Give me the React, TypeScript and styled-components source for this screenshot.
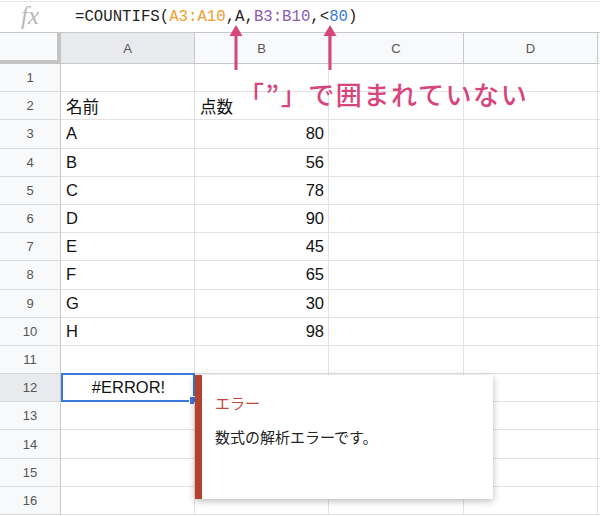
import React, { FC } from 'react'
import { styled, createGlobalStyle } from 'styled-components'

interface RowData {
    num: number
    name?: string
    score?: string
}

const rows: RowData[] = [
    { num: 1 },
    { num: 2, name: '名前', score: '点数' },
    { num: 3, name: 'A', score: '80' },
    { num: 4, name: 'B', score: '56' },
    { num: 5, name: 'C', score: '78' },
    { num: 6, name: 'D', score: '90' },
    { num: 7, name: 'E', score: '45' },
    { num: 8, name: 'F', score: '65' },
    { num: 9, name: 'G', score: '30' },
    { num: 10, name: 'H', score: '98' },
    { num: 11 },
    { num: 12 },
    { num: 13 },
    { num: 14 },
    { num: 15 },
    { num: 16 },
]

const columns = [
    { key: 'A', width: 134 },
    { key: 'B', width: 134 },
    { key: 'C', width: 135 },
    { key: 'D', width: 134 },
]

const PINK = '#d6457c'

const Arrow: FC<{ left: number }> = ({ left }) => (
    <ArrowSvg style={{ left: left - 8 }} width="16" height="46" viewBox="0 0 16 46">
        <polygon points="8,0 1.5,11 14.5,11" fill={PINK} />
        <rect x="6.5" y="9" width="3" height="36" fill={PINK} />
    </ArrowSvg>
)

const App: FC = () => {
  return (
    <>
    <GlobalStyle />
    <Page>
        <FormulaBar>
            <Fx>fx</Fx>
            <Formula>
                =COUNTIFS(<Ref color="#f29c2b">A3:A10</Ref>,A,<Ref color="#8d5bb0">B3:B10</Ref>,&lt;<Ref color="#3a7dd8">80</Ref>)
            </Formula>
        </FormulaBar>
        <Sheet>
            <HeaderRow>
                <Corner />
                {columns.map((c) => (
                    <ColHeader key={c.key} $w={c.width} $active={c.key === 'A'}>{c.key}</ColHeader>
                ))}
                <Rest />
            </HeaderRow>
            {rows.map((r) => (
                <Row key={r.num}>
                    <RowHeader $active={r.num === 12}>{r.num}</RowHeader>
                    <Cell $w={134} $selected={r.num === 12} $center={r.num === 12}>
                        {r.num === 12 ? '#ERROR!' : r.name}
                        {r.num === 12 && <Handle />}
                    </Cell>
                    <Cell $w={134} $right={r.num > 2}>{r.score}</Cell>
                    <Cell $w={135} />
                    <Cell $w={134} />
                    <Rest />
                </Row>
            ))}
        </Sheet>

        <Arrow left={236} />
        <Arrow left={330} />
        <Note>「”」で囲まれていない</Note>

        <Tooltip>
            <TooltipTitle>エラー</TooltipTitle>
            <TooltipBody>数式の解析エラーです。</TooltipBody>
        </Tooltip>
    </Page>
    </>
  )
}

export default App

const GlobalStyle = createGlobalStyle`
    body {
        margin: 0;
        background: #fff;
        font-family: "Liberation Sans", "Noto Sans CJK JP", sans-serif;
    }
`

const Page = styled.div`
    position: relative;
    width: 600px;
    height: 516px;
    overflow: hidden;
    background: #fff;
`

const FormulaBar = styled.div`
    display: flex;
    align-items: center;
    height: 31px;
    border-top: 1px solid #e6e6e6;
    margin-top: 1px;
    box-sizing: border-box;
`

const Fx = styled.div`
    width: 75px;
    padding-left: 21px;
    box-sizing: border-box;
    font-family: "Liberation Serif", "DejaVu Serif", serif;
    font-style: italic;
    font-size: 25px;
    color: #b8b8b8;
    line-height: 1;
    margin-top: -3px;
`

const Formula = styled.div`
    font-family: "Liberation Mono", "DejaVu Sans Mono", monospace;
    font-size: 15.7px;
    color: #222;
`

const Ref = styled.span<{ color: string }>`
    color: ${(p) => p.color};
`

const Sheet = styled.div`
    display: flex;
    flex-direction: column;
`

const HeaderRow = styled.div`
    display: flex;
    height: 32px;
    border-top: 1px solid #c8c8c8;
    box-sizing: border-box;
    background: #f8f9fa;
`

const Corner = styled.div`
    width: 61px;
    flex-shrink: 0;
    box-sizing: border-box;
    border-right: 4px solid #c4c4c4;
    border-bottom: 4px solid #c4c4c4;
`

const ColHeader = styled.div<{ $w: number; $active?: boolean }>`
    width: ${(p) => p.$w}px;
    flex-shrink: 0;
    box-sizing: border-box;
    display: flex;
    align-items: center;
    justify-content: center;
    border-right: 1px solid #c8c8c8;
    border-bottom: 1px solid #c8c8c8;
    background: ${(p) => (p.$active ? '#e8eaed' : '#f8f9fa')};
    font-size: 13px;
    color: #555;
`

const Rest = styled.div`
    flex: 1;
    border-bottom: 1px solid #e2e2e2;
`

const Row = styled.div`
    display: flex;
    height: 28.2px;
`

const RowHeader = styled.div<{ $active?: boolean }>`
    width: 61px;
    flex-shrink: 0;
    box-sizing: border-box;
    display: flex;
    align-items: center;
    justify-content: center;
    background: ${(p) => (p.$active ? '#e8eaed' : '#f8f9fa')};
    border-right: 1px solid #c8c8c8;
    border-bottom: 1px solid #d8d8d8;
    font-size: 13px;
    color: #555;
`

const Cell = styled.div<{ $w: number; $right?: boolean; $center?: boolean; $selected?: boolean }>`
    position: relative;
    width: ${(p) => p.$w}px;
    flex-shrink: 0;
    box-sizing: border-box;
    display: flex;
    align-items: center;
    justify-content: ${(p) => (p.$right ? 'flex-end' : p.$center ? 'center' : 'flex-start')};
    padding: 0 4px 0 5px;
    border-right: 1px solid #e2e2e2;
    border-bottom: 1px solid #e2e2e2;
    font-size: 16.5px;
    color: #111;
    ${(p) => p.$selected && `
        border: 2px solid #3a78dc;
        margin-top: -1px;
        height: calc(100% + 1px);
    `}
`

const Handle = styled.div`
    position: absolute;
    right: -5px;
    bottom: -5px;
    width: 7px;
    height: 7px;
    background: #3a78dc;
    border: 1px solid #fff;
`

const ArrowSvg = styled.svg`
    position: absolute;
    top: 25px;
`

const Note = styled.div`
    position: absolute;
    left: 238px;
    top: 76px;
    font-family: "Noto Sans CJK JP", sans-serif;
    font-size: 26px;
    font-weight: 500;
    letter-spacing: 1.6px;
    color: ${PINK};
    line-height: 36px;
    white-space: nowrap;
`

const Tooltip = styled.div`
    position: absolute;
    left: 195px;
    top: 375px;
    width: 298px;
    height: 124px;
    box-sizing: border-box;
    background: #fff;
    border-left: 7px solid #b5412f;
    box-shadow: 0 2px 7px rgba(0, 0, 0, 0.28);
    padding: 17px 0 0 13px;
    font-family: "Noto Sans CJK JP", sans-serif;
`

const TooltipTitle = styled.div`
    font-size: 15px;
    color: #c4493a;
    line-height: 22px;
`

const TooltipBody = styled.div`
    margin-top: 12px;
    font-size: 15px;
    color: #222;
    line-height: 22px;
`
